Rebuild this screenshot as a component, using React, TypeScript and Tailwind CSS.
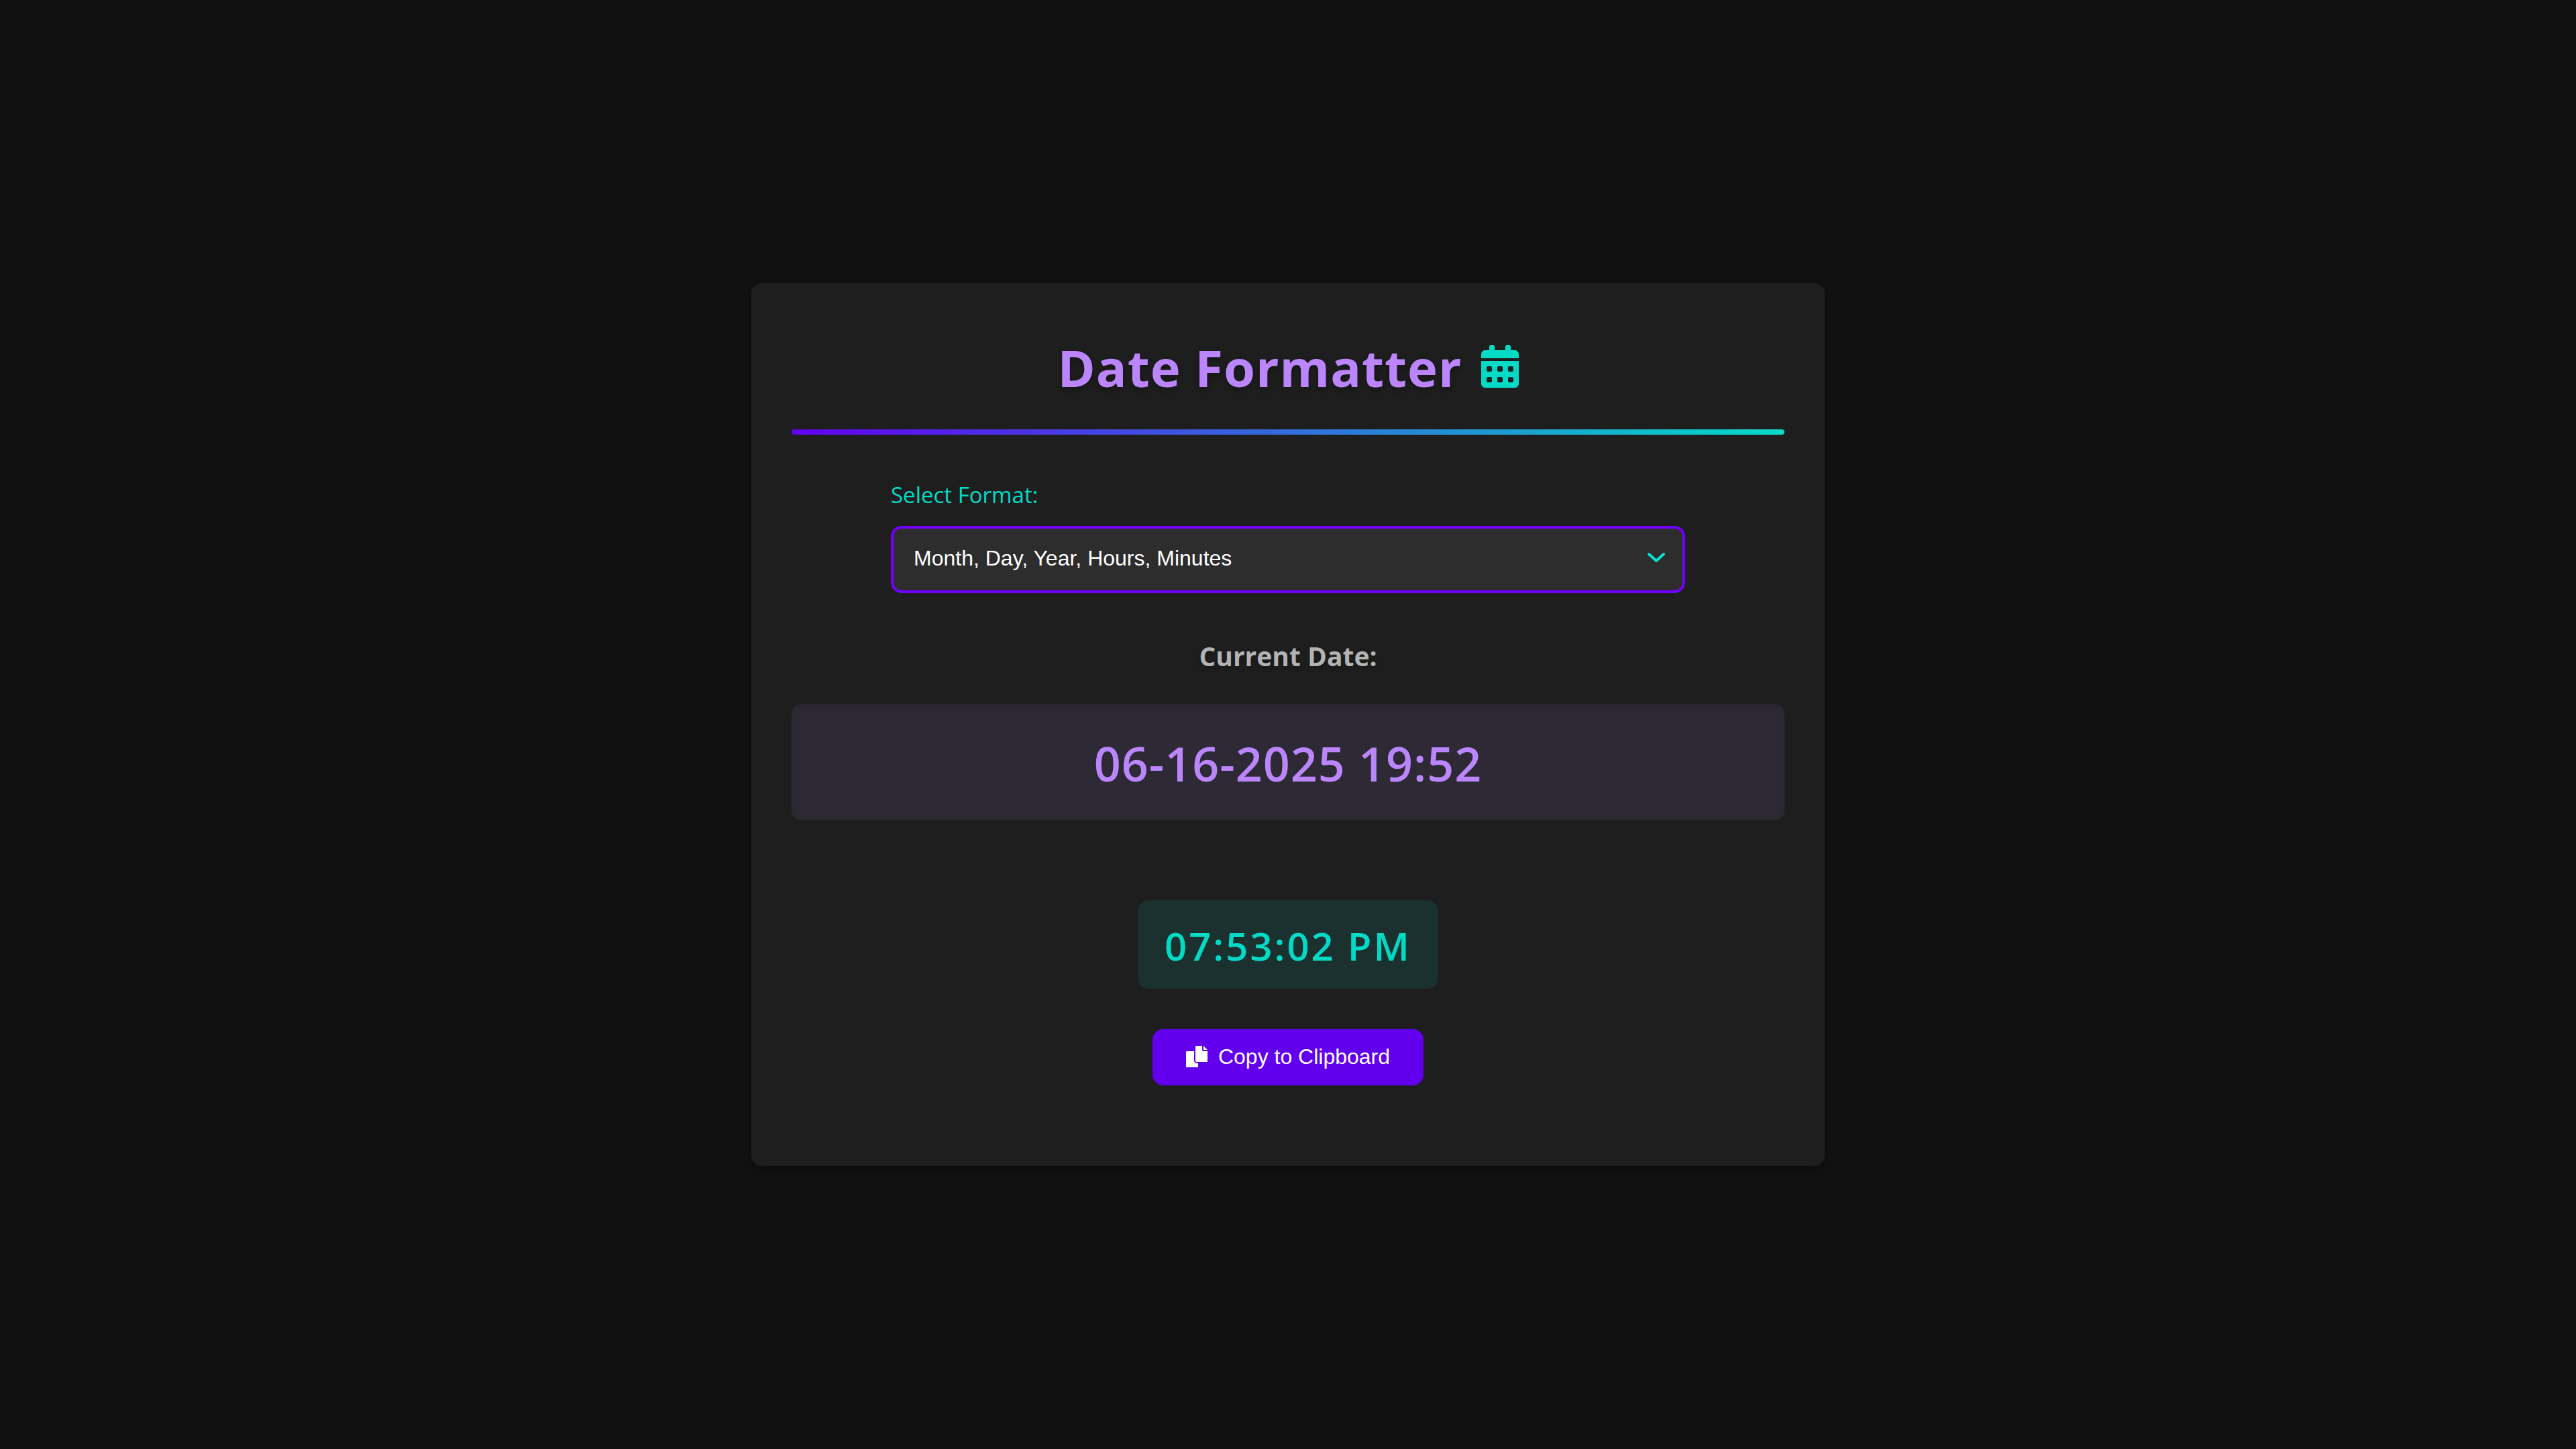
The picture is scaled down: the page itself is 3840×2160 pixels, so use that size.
const formats = ["Month, Day, Year, Hours, Minutes", "Day, Month, Year, Hours, Minutes", "Month, Day, Year", "Day, Month, Year"];

function CalendarIcon() {
  return (
    <svg viewBox="0 0 448 512" className="mb-1 h-16 w-14 shrink-0" fill="#03dac6" aria-hidden="true">
      <path d="M96 24C96 10.7 106.7 0 120 0h16c13.3 0 24 10.7 24 24v40h128V24c0-13.3 10.7-24 24-24h16c13.3 0 24 10.7 24 24v40h48c26.5 0 48 21.5 48 48v48H0v-48c0-26.5 21.5-48 48-48h48V24z" />
      <path
        fillRule="evenodd"
        d="M0 192h448v272c0 26.5-21.5 48-48 48H48c-26.5 0-48-21.5-48-48V192zM80 256c-8.8 0-16 7.2-16 16v32c0 8.8 7.2 16 16 16h32c8.8 0 16-7.2 16-16v-32c0-8.8-7.2-16-16-16H80zM208 256c-8.8 0-16 7.2-16 16v32c0 8.8 7.2 16 16 16h32c8.8 0 16-7.2 16-16v-32c0-8.8-7.2-16-16-16h-32zM336 256c-8.8 0-16 7.2-16 16v32c0 8.8 7.2 16 16 16h32c8.8 0 16-7.2 16-16v-32c0-8.8-7.2-16-16-16h-32zM80 384c-8.8 0-16 7.2-16 16v32c0 8.8 7.2 16 16 16h32c8.8 0 16-7.2 16-16v-32c0-8.8-7.2-16-16-16H80zM208 384c-8.8 0-16 7.2-16 16v32c0 8.8 7.2 16 16 16h32c8.8 0 16-7.2 16-16v-32c0-8.8-7.2-16-16-16h-32zM336 384c-8.8 0-16 7.2-16 16v32c0 8.8 7.2 16 16 16h32c8.8 0 16-7.2 16-16v-32c0-8.8-7.2-16-16-16h-32z"
      />
    </svg>
  );
}

function CopyIcon() {
  return (
    <svg viewBox="0 0 512 512" className="size-8 shrink-0" fill="currentColor" aria-hidden="true">
      <path d="M384 96V0H248c-13.3 0-24 10.7-24 24v336c0 13.3 10.7 24 24 24h240c13.3 0 24-10.7 24-24V128h-96c-17.7 0-32-14.3-32-32zM416 0v96h96L416 0zM192 352V128H24c-13.3 0-24 10.7-24 24v336c0 13.3 10.7 24 24 24h240c13.3 0 24-10.7 24-24v-72h-32c-35.3 0-64-28.7-64-64z" />
    </svg>
  );
}

function Chevron() {
  return (
    <svg
      viewBox="0 0 26 14"
      className="pointer-events-none absolute right-[30px] top-1/2 h-[14px] w-[26px] -translate-y-[10px]"
      fill="none"
      stroke="#03e6d2"
      strokeWidth="4"
      strokeLinecap="round"
      strokeLinejoin="round"
      aria-hidden="true"
    >
      <path d="M2 2l11 10L24 2" />
    </svg>
  );
}

export default function App() {
  return (
    <div className="flex min-h-screen items-center justify-center bg-[#111111] font-['Open_Sans','Noto_Sans',sans-serif]">
      <main className="flex w-full max-w-[1600px] flex-col items-center rounded-2xl bg-[#1e1e1e] px-[60px] pt-[70px] pb-[120px] shadow-[0_8px_16px_rgba(0,0,0,0.2)]">
        <h1 className="flex items-center gap-7 text-[76px] leading-[112px] font-bold tracking-[1px] text-[#bb86fc] [text-shadow:0_4px_8px_rgba(0,0,0,0.3)]">
          Date Formatter
          <CalendarIcon />
        </h1>
        <div className="mt-[36px] h-2 w-full rounded bg-linear-to-r/srgb from-[#6200ee] to-[#03dac6]" />

        <div className="mt-[60px] flex w-4/5 flex-col">
          <label htmlFor="format" className="text-[33px] leading-[60px] text-[#03dac6]">
            Select Format:
          </label>
          <div className="relative mt-4">
            <select
              id="format"
              className="block h-[100px] w-full appearance-none rounded-2xl border-4 border-[#7300ff] bg-[#2d2d2d] px-[30px] pb-1 font-['Liberation_Sans',Arial,sans-serif] text-[32px] text-white"
            >
              {formats.map((format) => (
                <option key={format}>{format}</option>
              ))}
            </select>
            <Chevron />
          </div>
        </div>

        <h2 className="mt-[64px] text-[39px] leading-[60px] font-bold text-[#b3b3b3] [text-shadow:0_4px_8px_rgba(0,0,0,0.2)]">
          Current Date:
        </h2>
        <output className="mt-[42px] flex h-[172px] w-full items-center justify-center rounded-xl bg-[#2e2a35] pt-1 text-[70px] font-semibold tracking-[1px] text-[#bb86fc] shadow-[inset_0_4px_16px_rgba(0,0,0,0.1)]">
          06-16-2025 19:52
        </output>
        <time className="mt-[120px] flex h-[132px] items-center rounded-2xl bg-[#1b312f] px-10 pt-0.5 text-[58px] font-semibold tracking-[3px] text-[#03dac6]">
          07:53:02 PM
        </time>
        <button
          type="button"
          className="mt-[60px] flex h-[84px] items-center gap-4 rounded-2xl bg-[#6200ee] px-[50px] pb-0.5 font-['Liberation_Sans',Arial,sans-serif] text-[32px] text-white"
        >
          <CopyIcon />
          Copy to Clipboard
        </button>
      </main>
    </div>
  );
}
